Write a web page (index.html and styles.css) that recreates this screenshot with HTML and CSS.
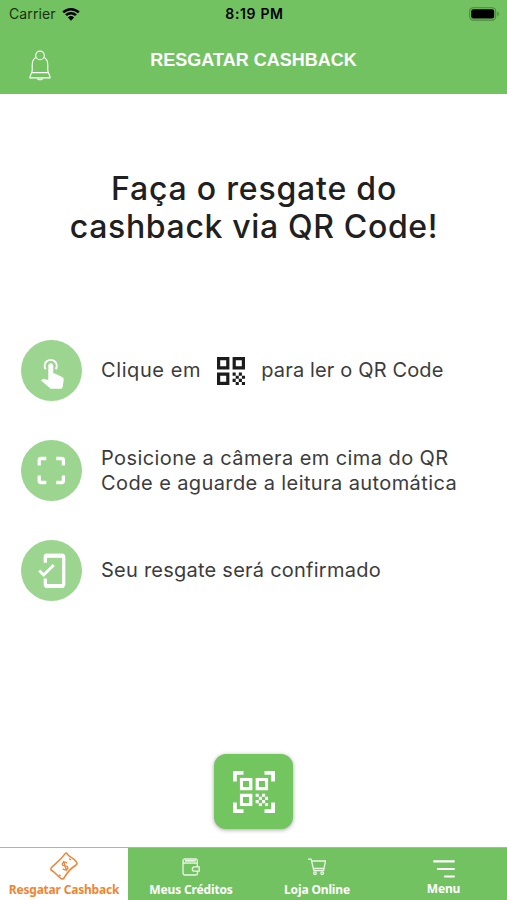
FILE: index.html
```
<!DOCTYPE html>
<html lang="pt-BR">
<head>
	<meta charset="UTF-8">
	<meta name="viewport" content="width=device-width, initial-scale=1.0">
	<title>Resgatar Cashback</title>
	<link rel="stylesheet" href="styles.css">
</head>
<body>
	<svg width="0" height="0" class="defs">
		<symbol id="qr" viewBox="0 0 28 28">
			<path fill-rule="evenodd" d="M0 0h12.4v12.4H0zM3.2 3.2v6h6v-6zM15.6 0H28v12.4H15.6zM18.8 3.2v6h6v-6zM0 15.6h12.4V28H0zM3.2 18.8v6h6v-6z"/>
			<path d="M15.6 15.6h3.1v3.1h-3.1zM21.8 15.6h3.1v3.1h-3.1zM18.7 18.7h3.1v3.1h-3.1zM24.9 18.7H28v3.1h-3.1zM15.6 21.8h3.1v3.1h-3.1zM21.8 21.8h3.1v3.1h-3.1zM18.7 24.9h3.1V28h-3.1zM24.9 24.9H28V28h-3.1z"/>
		</symbol>
	</svg>
	<header class="header">
		<div class="status">
			<div class="carrier">
				<span>Carrier</span>
				<svg width="18" height="14" viewBox="0 0 18 14">
					<path d="M1.2 5.3a11.2 11.2 0 0 1 15.6 0M4 8.2a7.2 7.2 0 0 1 10 0" fill="none" stroke="#000" stroke-width="2.5"/>
					<path d="M9 13.7 5.9 10.5a4.5 4.5 0 0 1 6.2 0z"/>
				</svg>
			</div>
			<div class="time">8:19 PM</div>
			<svg class="battery" width="31" height="14" viewBox="0 0 31 14">
				<rect x=".7" y=".7" width="26" height="12.4" rx="3.6" fill="none" stroke="#4d873e" stroke-width="1.1"/>
				<rect x="2.2" y="2.2" width="23" height="9.4" rx="2"/>
				<path d="M28.4 4.6c2 .9 2 3.9 0 4.8z" fill="#4d873e"/>
			</svg>
		</div>
		<div class="titlebar">
			<svg class="bell" width="22" height="31" viewBox="0 0 22 31" fill="none" stroke="#fff" stroke-width="1.1">
				<circle cx="11" cy="5.4" r="4.3"/>
				<path d="M7 7.4C4.2 8.8 3.2 11.4 3.2 14.8v5.8L2.6 22.6h16.8l-.6-2v-5.8c0-3.4-1-6-3.8-7.4M2.6 22.6 1 26.7v1.2h20v-1.2l-1.6-4.1M8.3 28c.3 2.4 5.1 2.4 5.4 0"/>
			</svg>
			<h1>RESGATAR CASHBACK</h1>
		</div>
	</header>
	<main class="content">
		<h2><span class="h-a">Faça o resgate do</span><br><span class="h-b">cashback via QR Code!</span></h2>
		<ul class="steps">
			<li>
				<div class="circle">
					<svg width="61" height="61" viewBox="0 0 61 61">
						<path d="M24.7 29.2a6 6 0 1 1 10 0" fill="none" stroke="#fff" stroke-width="2"/>
						<path fill="#fff" d="M27.3 25.8c0-3.5 5-3.5 5 0v7.7h1.5l6.9 3.2c1.5.7 2.2 1.8 2 3.3l-1 6.7c-.2 1.4-1 2.1-2.3 2.1H31c-.9 0-1.6-.3-2.2-.9L20.1 40.6l1.2-1.1c.5-.5 1-.6 1.6-.5l4.4 1z"/>
					</svg>
				</div>
				<p class="inline"><span class="s-a">Clique em</span><svg class="qr" width="28" height="28"><use href="#qr"/></svg><span class="s-b">para ler o QR Code</span></p>
			</li>
			<li>
				<div class="circle">
					<svg width="61" height="61" viewBox="0 0 61 61">
						<path d="M18.2 25.5v-5.2q0-1.8 1.8-1.8h5.3M35.3 18.5h5.3q1.8 0 1.8 1.8v5.2M42.4 35.5v5.2q0 1.8-1.8 1.8h-5.3M25.3 42.5H20q-1.8 0-1.8-1.8v-5.2" fill="none" stroke="#fff" stroke-width="3.3"/>
					</svg>
				</div>
				<p><span class="s-c">Posicione a câmera em cima do QR</span><br><span class="s-d">Code e aguarde a leitura automática</span></p>
			</li>
			<li>
				<div class="circle">
					<svg width="61" height="61" viewBox="0 0 61 61" fill="none" stroke="#fff">
						<path d="M24.3 22.7v-6.2q0-1 1-1H41.2q1.5 0 1.5 1.5v27.3q0 1.5-1.5 1.5H25.3q-1 0-1-1v-6.2" stroke-width="3.3"/>
						<path d="M24 15.7h18.7M24 45.9h18.7" stroke-width="4"/>
						<path d="m18.3 30.6 4.4 4.5 10.1-10" stroke-width="2.8"/>
					</svg>
				</div>
				<p><span class="s-e">Seu resgate será confirmado</span></p>
			</li>
		</ul>
		<button type="button" class="scan">
			<svg width="42" height="42" viewBox="0 0 42 42" fill="#fff">
				<path d="M0 0h10.5v3.8H3.8v6.7H0zM31.5 0H42v10.5h-3.8V3.8h-6.7zM0 31.5h3.8v6.7h6.7V42H0zM38.2 31.5H42V42H31.5v-3.8h6.7z"/>
				<use href="#qr" x="6.7" y="6.7" width="28.6" height="28.6"/>
			</svg>
		</button>
	</main>
	<nav class="tabs">
		<a class="tab active">
			<svg width="30" height="30" viewBox="0 0 30 30" fill="none" stroke="#ee8434" stroke-width="1.5">
				<path d="M18.2 1.8c1.4 3.7 5.9 2.7 9.4 8.4.8 1.3.6 2-.5 2.8-5.8 3.5-8.6 7-11.8 12.5-.9 1.6-1.8 2-3.1 1.1-4-2.8-5.6-6-9.5-8.1-1.1-.7-1.1-1.6-.4-2.7C6 11.7 10.9 8.8 15.6 2.4c.9-1.2 1.9-1.9 2.6-.6z"/>
				<path d="M18 11.2c-1.5-1.9-5.4-.7-4.6 1.6.7 2 4.6.2 5.4 2.4.8 2.4-3.5 3.6-5.2 1.4M14.5 8.9l3 10M20 6.7l2 1.2M9.8 22.7l2 1.3" stroke-width="1.3"/>
			</svg>
			<span>Resgatar Cashback</span>
		</a>
		<a class="tab">
			<svg width="18" height="18" viewBox="0 0 18 18" fill="none" stroke="#e9f6e5" stroke-width="1.3">
				<path d="M15.3 5V2.6Q15.3 1 13.7 1H3Q1 1 1 3v11.7Q1 17 3.2 17h10.6q1.7 0 1.7-1.6v-2.1M1.2 3.8Q1.5 5.1 3 5.1h12.3v3.5M17.2 8.8v4.4h-4.7a2.2 2.2 0 0 1 0-4.4z"/>
				<path d="M3 2.5h10.8M3 3.8h10.8" stroke-width="1"/>
			</svg>
			<span>Meus Créditos</span>
		</a>
		<a class="tab">
			<svg width="18" height="18" viewBox="0 0 18 18" fill="none" stroke="#e9f6e5" stroke-width="1.3">
				<path d="M0 1.2h3.1l2.7 11.3h9.8L17.5 3H3.7M5.2 10.3h10.7"/>
				<circle cx="7" cy="15.2" r="1.3"/>
				<circle cx="14.2" cy="15.2" r="1.3"/>
			</svg>
			<span>Loja Online</span>
		</a>
		<a class="tab menu">
			<svg width="22" height="18" viewBox="0 0 22 18" fill="none" stroke="#fff" stroke-width="2.2" stroke-linecap="round">
				<path d="M1.1 1.4h19.8M4.9 9h16M11.9 16.5h9"/>
			</svg>
			<span>Menu</span>
		</a>
	</nav>
</body>
</html>
```
FILE: styles.css
```
* {
	box-sizing: border-box;
}
body {
	margin: 0;
	height: 900px;
	display: flex;
	flex-direction: column;
	background: #fff;
	font-family: Inter, sans-serif;
	overflow: hidden;
}
.defs {
	position: absolute;
}
.header {
	height: 94px;
	background: #73c262;
}
.status {
	height: 27px;
	padding: 0 7px 0 9px;
	display: grid;
	grid-template-columns: 1fr auto 1fr;
	align-items: center;
	font-size: 14px;
}
.carrier {
	display: flex;
	align-items: center;
	gap: 6px;
	color: #17310f;
	letter-spacing: .1px;
}
.time {
	font-weight: 600;
	letter-spacing: .65px;
}
.battery {
	justify-self: end;
}
.titlebar {
	display: grid;
	grid-template-columns: 100px 1fr 100px;
	padding-top: 23px;
}
.bell {
	margin-left: 29px;
}
h1 {
	margin: 0;
	text-align: center;
	color: #fff;
	font: bold 18px/20px "Liberation Sans", Arial, sans-serif;
	white-space: nowrap;
}
.content {
	flex: 1;
	display: flex;
	flex-direction: column;
}
h2 {
	margin: 76px 0 0;
	padding-left: 1px;
	text-align: center;
	font-size: 32px;
	line-height: 38px;
	font-weight: 460;
	color: #202020;
	white-space: nowrap;
}
.h-a {
	letter-spacing: .8px;
}
.h-b {
	letter-spacing: .65px;
}
.steps {
	list-style: none;
	margin: 94px 0 0;
	padding: 0 0 0 20.5px;
	display: flex;
	flex-direction: column;
	gap: 39px;
}
.steps li {
	display: flex;
	align-items: center;
	gap: 19.5px;
}
.circle {
	width: 61px;
	height: 61px;
	border-radius: 50%;
	background: #9bd58f;
}
.steps p {
	margin: 0;
	font-size: 20px;
	line-height: 24.5px;
	color: #3c3c3c;
	white-space: nowrap;
}
.steps .inline {
	display: flex;
	align-items: center;
}
.s-a {
	letter-spacing: .6px;
}
.s-b {
	letter-spacing: .15px;
}
.s-c {
	letter-spacing: .42px;
}
.s-d {
	letter-spacing: .4px;
}
.s-e {
	letter-spacing: .24px;
}
.qr {
	margin: 0 16.5px 0 15.5px;
	fill: #1c1c1c;
}
.scan {
	width: 79px;
	height: 75px;
	margin: auto auto 18px;
	display: flex;
	align-items: center;
	justify-content: center;
	border: none;
	border-radius: 12px;
	background: #73c55f;
	box-shadow: 0 1px 4px rgba(0, 0, 0, .35);
}
.tabs {
	height: 53px;
	display: grid;
	grid-template-columns: 128px 126px 126px 127px;
	background: #73c262;
	border-top: 1px solid #8fce81;
}
.tab {
	display: flex;
	flex-direction: column;
	align-items: center;
	justify-content: flex-end;
	padding-bottom: 2px;
	gap: 6px;
	color: #fff;
	font: bold 12px/16px "Noto Sans", sans-serif;
	letter-spacing: -.15px;
	white-space: nowrap;
}
.active {
	background: #fff;
	color: #f08532;
	gap: 0;
	letter-spacing: -.2px;
}
.menu {
	padding-bottom: 3px;
	gap: 3px;
}
```
